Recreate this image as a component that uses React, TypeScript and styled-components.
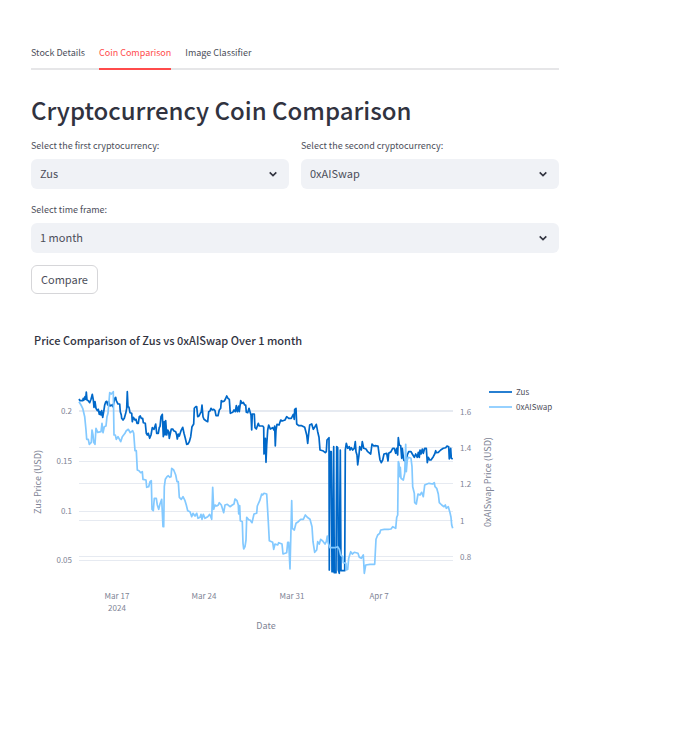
import React, { useId, useState } from 'react';
import styled, { createGlobalStyle } from 'styled-components';

const sans = '"Source Sans Pro", "Noto Sans CJK SC", "Noto Sans", sans-serif';
const ink = '#31333f';
const softInk = '#4c4e5a';
const muted = '#808495';
const accent = '#ff4b4b';
const field = '#f0f2f6';
const line = '#e6eaf1';
const zusBlue = '#0068c9';
const swapBlue = '#83c9ff';

const GlobalStyle = createGlobalStyle`
  * { box-sizing: border-box; }
  body { margin: 0; background: #fff; color: ${ink}; font-family: ${sans}; }
  button, select { font-family: inherit; }
`;

const Page = styled.main`
  padding: 38px 136px 40px 31px;
`;

const TabList = styled.div`
  display: flex;
  gap: 14px;
  box-shadow: inset 0 -2px 0 #e6e6e8;
`;

const Tab = styled.button<{ $active: boolean }>`
  height: 32px;
  padding: 0;
  border: 0;
  border-bottom: 2px solid ${p => (p.$active ? accent : 'transparent')};
  background: none;
  color: ${p => (p.$active ? accent : softInk)};
  font-size: 9px;
  line-height: 28px;
  white-space: nowrap;
  cursor: pointer;
`;

const Heading = styled.h1`
  margin: 20px 0 9px;
  font-size: 24px;
  font-weight: 500;
  line-height: 40px;
`;

const Form = styled.form`
  display: grid;
  grid-template-columns: 1fr 1fr;
  gap: 14px 12px;
`;

const Field = styled.div<{ $wide?: boolean }>`
  display: flex;
  flex-direction: column;
  gap: 6px;
  grid-column: ${p => (p.$wide ? '1 / -1' : 'auto')};
`;

const Label = styled.label`
  color: ${softInk};
  font-size: 9px;
  line-height: 14px;
`;

const SelectShell = styled.div`
  display: grid;
  align-items: center;
  & > * { grid-area: 1 / 1; }
`;

const Select = styled.select`
  appearance: none;
  width: 100%;
  height: 30px;
  padding: 0 30px 2px 9px;
  border: 0;
  border-radius: 6px;
  background: ${field};
  color: ${softInk};
  font-size: 11px;
`;

const Chevron = styled.svg`
  justify-self: end;
  margin-right: 11px;
  pointer-events: none;
`;

const CompareButton = styled.button`
  justify-self: start;
  height: 29px;
  margin-top: -2px;
  padding: 0 9px 2px;
  border: 1px solid #d6d6d9;
  border-radius: 6px;
  background: #fff;
  color: ${softInk};
  font-size: 11px;
  cursor: pointer;
`;

const Figure = styled.figure`
  margin: 36px 0 0;
`;

const Caption = styled.figcaption`
  padding-left: 3px;
  font-size: 11px;
  font-weight: 500;
  line-height: 20px;
`;

const Plot = styled.svg`
  display: block;
  width: 100%;
  height: auto;
  overflow: visible;
  font-family: ${sans};
`;

const Tick = styled.text`
  font-size: 8px;
  fill: ${muted};
`;

const AxisTitle = styled.text`
  font-size: 9px;
  fill: ${muted};
  text-anchor: middle;
`;

const LegendText = styled.text`
  font-size: 8px;
  fill: ${softInk};
`;

/* Each run starts at `x`; its samples are steps of a third of a unit from there. */
type Run = { x: number; samples: string };

const zus: Run[] = [
  {
    x: 70,
    samples:
      '27,57 30,62 38,62 40,55 42,60 45,50 47,58 49,36 51,60 55,62 59,68 63,58 65,50 67,43 70,60 72,82 75,65 78,85 82,92 85,88 88,103 90,95 93,105 95,92 98,112 101,95 104,75 107,66 110,64 113,75 116,65 120,78 126,75 129,80 134,55 137,52 139,62 144,72 149,72 151,95 154,105 155,115 159,120 163,115 167,100 170,85 172,35 174,80 177,82 180,98 185,100 187,125 190,112 195,120 198,118 201,130 205,130 208,110 211,108 214,115 218,115 220,128 226,130 229,160 232,165 235,160 239,175 243,165 247,143 252,148 257,132 260,160 265,160 268,142',
  },
  {
    x: 160,
    samples:
      '0,140 3,110 7,103 10,170 13,125 15,165 17,122 20,165 23,150 26,155 28,175 32,155 34,147 38,147 41,152 47,155 50,165 52,177 55,162 58,168 63,152 68,142 72,160 76,175 80,193 84,192 88,185 92,170 96,140 101,132 103,85 107,80 110,80 113,110 117,108 121,100 124,95 126,75 129,110 132,118 138,122 143,125 146,95 150,93 153,85 157,90 161,88 165,92 168,107 174,107 178,90 182,85 184,62 188,65 193,63 196,58 200,48 204,55 208,58 211,100 218,97 222,90 226,95 229,77 232,95 236,78 238,95 242,62 246,70 250,67 254,75 257,75 259,97 263,98 267,85',
  },
  {
    x: 250,
    samples:
      '0,95 3,105 5,150 7,102 13,102 15,143 19,147 25,130 28,138 38,138 41,142 42,222 46,175 48,247 50,195 53,150 56,135 61,147 68,143 72,150 74,138 76,198 78,150 81,133 87,135 92,120 97,123 105,120 110,110 116,115 124,115 130,103 133,118 134,88 138,85 140,132 146,137 155,137 164,142 170,165 173,190 176,160 179,135 185,132 190,148 195,140 199,133 203,155 207,172 210,210 218,212 226,218 229,215 231,180 237,173',
  },
  {
    x: 320,
    samples:
      '28,570 30,215 34,215 36,575 38,575 41,200 43,578 48,578 50,200 53,203 55,570 58,580 61,210 63,572 74,572 76,210 79,190 83,205 88,200 90,210 94,203 98,210 103,205 106,185 108,215 111,225 113,255 117,225 119,200 124,210 127,185 131,205 138,207 143,215 152,222 156,192 161,198 166,197 174,198 177,220',
  },
  {
    x: 380,
    samples:
      '0,240 4,248 8,240 12,222 20,220 24,243 26,220 33,215 38,205 43,205 47,220 50,205 53,225 55,173 58,195 62,197 65,235 67,205 71,240 77,245 82,225 86,215 93,215 97,222 103,232 107,222 112,232 115,217 118,232 120,210 123,222 127,207 130,220 134,205 139,205 142,248 145,232 149,240 153,240 160,230 164,222 167,212 169,218 175,217 182,210 190,205 197,203 201,198 206,200 208,237 212,205 214,235 218,237',
  },
];

const aiSwap: Run[] = [
  {
    x: 70,
    samples:
      '27,65 33,75 38,85 44,110 48,150 50,178 55,178 58,193 64,187 66,150 69,165 71,187 75,193 78,145 83,157 93,155 96,130 99,158 103,140 108,138 111,110 114,100 116,75 119,38 124,42 130,35 132,165 136,165 139,178 144,170 152,185 157,170 165,160 169,152 175,148 181,158 188,152 191,160 195,212 199,212 202,270 207,272 212,278 217,275 219,298 228,300 230,322 236,320 240,305 244,302 246,388 250,392 253,355 259,355 262,375 266,388',
  },
  {
    x: 160,
    samples:
      '0,372 5,358 9,440 11,440 13,320 16,298 21,290 25,287 29,292 33,290 35,265 41,270 47,285 51,305 55,305 58,352 64,358 69,350 75,362 79,375 83,392 90,395 95,410 99,400 105,408 110,400 114,415 120,412 123,403 126,418 130,403 135,415 143,410 149,403 155,418 158,322 161,388 165,375 170,378 175,375 178,368 184,375 191,398 195,375 202,373 210,380 217,375 222,372 225,357 231,362 235,375 236,402 239,377 241,422 247,425 249,490 251,507 255,500 258,480 260,412 267,420',
  },
  {
    x: 250,
    samples:
      '0,420 6,428 12,402 20,400 22,378 29,362 35,342 38,345 42,340 50,342 55,425 58,482 68,487 71,508 75,492 83,495 86,488 96,492 99,522 110,518 113,487 116,487 120,567 125,362 127,445 133,450 138,430 145,425 152,418 160,418 166,405 172,412 180,418 186,440 189,485 194,517 200,510 203,485 208,492 212,478 218,483 225,492 229,485 232,468 235,490 240,503 255,503 263,500',
  },
  {
    x: 320,
    samples:
      '58,508 62,525 68,530 70,548 78,550 79,570 83,568 86,535 92,515 97,522 103,517 114,520 118,532 124,535 130,525 133,580 137,555 150,553 164,553 168,478 173,465 179,460',
  },
  {
    x: 380,
    samples:
      '2,450 13,448 25,448 33,447 38,440 47,445 50,412 53,405 55,245 57,250 59,290 61,262 63,295 70,300 74,280 77,193 79,275 82,240 85,232 93,235 96,260 98,320 103,340 104,368 109,372 114,342 120,345 125,337 130,350 134,315 141,312 147,310 158,312 163,308 165,320 170,325 175,342 178,368 185,375 192,380 196,375 199,385 205,380 210,398 213,412 215,435 218,445',
  },
];

const toPoints = (runs: Run[]) =>
  runs
    .flatMap(run =>
      run.samples.split(' ').map(pair => {
        const [dx, dy] = pair.split(',').map(Number);
        return `${(run.x + dx / 3).toFixed(1)},${(380 + dy / 3).toFixed(1)}`;
      }),
    )
    .join(' ');

const leftTicks = [
  { y: 411, label: '0.2' },
  { y: 461, label: '0.15' },
  { y: 511, label: '0.1' },
  { y: 560, label: '0.05' },
];
const rightTicks = [
  { y: 411, label: '1.6' },
  { y: 447, label: '1.4' },
  { y: 483, label: '1.2' },
  { y: 520, label: '1' },
  { y: 556, label: '0.8' },
];
const dateTicks = [
  { x: 117, label: 'Mar 17' },
  { x: 204, label: 'Mar 24' },
  { x: 292, label: 'Mar 31' },
  { x: 379, label: 'Apr 7' },
];
const legend = [
  { y: 392, label: 'Zus', color: zusBlue },
  { y: 407, label: '0xAISwap', color: swapBlue },
];

function PriceChart() {
  return (
    <Plot viewBox="31 350 528 290" role="img" aria-label="Price of Zus and 0xAISwap by date">
      <g stroke={line} strokeWidth="1" shapeRendering="crispEdges">
        {[...leftTicks, ...rightTicks].map(t => (
          <line key={t.label} x1="79" x2="453" y1={t.y} y2={t.y} />
        ))}
        <line x1="79" x2="453" y1="410" y2="410" />
      </g>
      <g fill="none" strokeWidth="1.7" strokeLinejoin="round">
        <polyline points={toPoints(zus)} stroke={zusBlue} />
        <polyline points={toPoints(aiSwap)} stroke={swapBlue} />
      </g>
      {leftTicks.map(t => (
        <Tick key={t.label} x="72" y={t.y + 3} textAnchor="end">{t.label}</Tick>
      ))}
      {rightTicks.map(t => (
        <Tick key={t.label} x="460" y={t.y + 4}>{t.label}</Tick>
      ))}
      {dateTicks.map(t => (
        <Tick key={t.label} x={t.x} y="599" textAnchor="middle">{t.label}</Tick>
      ))}
      <Tick x="117" y="611" textAnchor="middle">2024</Tick>
      <AxisTitle x="266" y="629">Date</AxisTitle>
      <AxisTitle transform="translate(41 482) rotate(-90)">Zus Price (USD)</AxisTitle>
      <AxisTitle transform="translate(491 482) rotate(-90)">0xAISwap Price (USD)</AxisTitle>
      {legend.map(item => (
        <g key={item.label}>
          <line x1="489" x2="512" y1={item.y} y2={item.y} stroke={item.color} strokeWidth="1.7" />
          <LegendText x="516" y={item.y + 3}>{item.label}</LegendText>
        </g>
      ))}
    </Plot>
  );
}

type PickerProps = { label: string; options: string[]; wide?: boolean };

function Picker({ label, options, wide }: PickerProps) {
  const id = useId();
  return (
    <Field $wide={wide}>
      <Label htmlFor={id}>{label}</Label>
      <SelectShell>
        <Select id={id} defaultValue={options[0]}>
          {options.map(option => (
            <option key={option}>{option}</option>
          ))}
        </Select>
        <Chevron width="10" height="10" viewBox="0 0 10 10" aria-hidden="true">
          <path d="M1.7 3.4 5 6.6 8.3 3.4" fill="none" stroke={ink} strokeWidth="1.6" />
        </Chevron>
      </SelectShell>
    </Field>
  );
}

const tabs = ['Stock Details', 'Coin Comparison', 'Image Classifier'];

export default function App() {
  const [active, setActive] = useState(tabs[1]);
  return (
    <>
      <GlobalStyle />
      <Page>
        <TabList role="tablist">
          {tabs.map(tab => (
            <Tab
              key={tab}
              type="button"
              role="tab"
              aria-selected={tab === active}
              $active={tab === active}
              onClick={() => setActive(tab)}
            >
              {tab}
            </Tab>
          ))}
        </TabList>
        <Heading>Cryptocurrency Coin Comparison</Heading>
        <Form onSubmit={event => event.preventDefault()}>
          <Picker label="Select the first cryptocurrency:" options={['Zus', '0xAISwap']} />
          <Picker label="Select the second cryptocurrency:" options={['0xAISwap', 'Zus']} />
          <Picker label="Select time frame:" options={['1 month']} wide />
          <CompareButton type="submit">Compare</CompareButton>
        </Form>
        <Figure>
          <Caption>Price Comparison of Zus vs 0xAISwap Over 1 month</Caption>
          <PriceChart />
        </Figure>
      </Page>
    </>
  );
}
